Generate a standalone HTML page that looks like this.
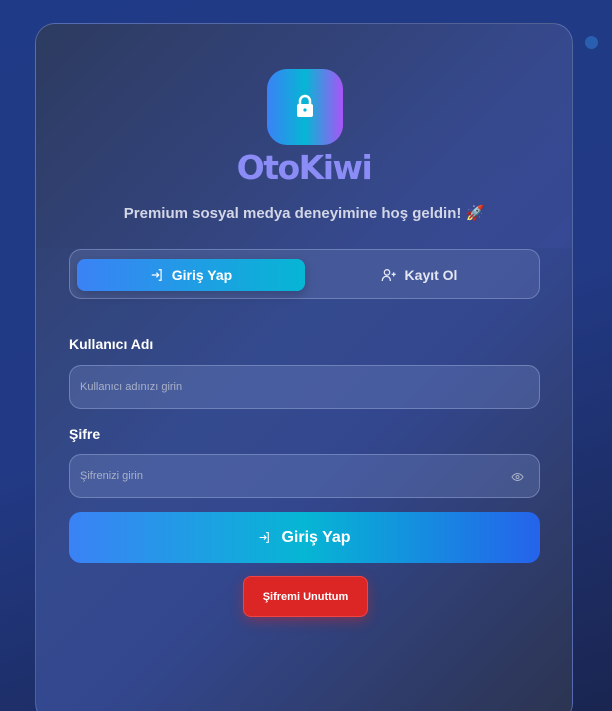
<!DOCTYPE html>
<html style="width:612px;height:711px;overflow:hidden"><head><meta charset="utf-8"><style>
*{box-sizing:border-box;margin:0;padding:0}
body{width:612px;height:711px;overflow:hidden;font-family:"Liberation Sans",sans-serif;background:linear-gradient(160deg,#1f3a86 0%,#223a86 50%,#1a2550 100%);position:relative}
.dot{position:absolute;left:585px;top:36px;width:13px;height:13px;border-radius:50%;background:#2a5fb0}
.card{position:absolute;left:35px;top:23px;width:538px;height:700px;border-radius:20px;border:1px solid rgba(130,150,220,.45);background:linear-gradient(135deg,#2f3d63 0%,#344a8e 45%,#33478f 60%,#2c3450 100%);overflow:hidden}
.head{position:absolute;left:0;top:0;right:0;height:224px;background:linear-gradient(135deg,rgba(40,55,90,.3),rgba(80,80,180,.15))}
.logo{position:absolute;left:231px;top:45px;width:76px;height:76px;border-radius:20px;background:linear-gradient(90deg,#3b82f6 0%,#06b6d4 50%,#a855f7 100%)}
.title{position:absolute;left:0;right:0;top:124px;text-align:center;font-family:"DejaVu Sans",sans-serif;font-size:33px;font-weight:bold;color:#8b8cf6;letter-spacing:-1.5px}
.sub{position:absolute;left:0;right:0;top:180px;text-align:center;font-size:15px;font-weight:bold;color:#d2d6e6}
.tabs{position:absolute;left:33px;top:225px;width:471px;height:50px;border-radius:12px;border:1px solid rgba(160,175,220,.45);background:rgba(120,135,190,.25)}
.tab1{position:absolute;left:7px;top:9px;width:228px;height:32px;border-radius:8px;background:linear-gradient(90deg,#3b82f6,#06b6d4);color:#fff;font-weight:bold;font-size:14px;display:flex;align-items:center;justify-content:center;gap:8px;box-shadow:0 4px 10px rgba(0,0,0,.2)}
.tab2{position:absolute;left:235px;top:9px;width:228px;height:32px;color:#e4e7f2;font-weight:bold;font-size:14px;display:flex;align-items:center;justify-content:center;gap:8px}
.lbl{position:absolute;left:33px;color:#fff;font-weight:bold;font-size:14px}
.inp{position:absolute;left:33px;width:471px;height:44px;border-radius:12px;border:1px solid rgba(160,175,220,.45);background:rgba(120,140,200,.3);color:#a9b0c8;font-size:11px;padding-left:10px;display:flex;align-items:center}
.btn{position:absolute;left:33px;top:488px;width:471px;height:51px;border-radius:12px;background:linear-gradient(90deg,#3b82f6 0%,#06b6d4 50%,#2563eb 100%);color:#fff;font-weight:bold;font-size:16px;display:flex;align-items:center;justify-content:center;gap:10px}
.red{position:absolute;left:207px;top:552px;width:125px;height:41px;border-radius:8px;background:#dc2626;border:1px solid #ef4444;color:#fff;font-weight:bold;font-size:11px;display:flex;align-items:center;justify-content:center;box-shadow:0 4px 12px rgba(220,38,38,.4)}
</style></head><body>
<div class="dot"></div>
<div class="card">
<div class="head"></div>
<div class="logo"><svg width="76" height="76" viewBox="0 0 76 76"><path d="M33 36v-4a5 5 0 0 1 10 0v4" fill="none" stroke="#fff" stroke-width="2.5"/><rect x="30" y="35" width="16" height="13" rx="2" fill="#fff"/><circle cx="38" cy="41" r="1.6" fill="#06b6d4"/></svg></div>
<div class="title">OtoKiwi</div>
<div class="sub">Premium sosyal medya deneyimine hoş geldin! 🚀</div>
<div class="tabs">
<div class="tab1"><svg width="14" height="14" viewBox="0 0 24 24" fill="none" stroke="#fff" stroke-width="2"><path d="M15 3h4v18h-4M3 12h12M11 8l4 4-4 4"/></svg>Giriş Yap</div>
<div class="tab2"><svg width="16" height="16" viewBox="0 0 24 24" fill="none" stroke="#e4e7f2" stroke-width="2"><circle cx="9" cy="8" r="4"/><path d="M2 21v-1a6 6 0 0 1 12 0v1M19 8v6M16 11h6"/></svg>Kayıt Ol</div>
</div>
<div class="lbl" style="top:312px">Kullanıcı Adı</div>
<div class="inp" style="top:341px">Kullanıcı adınızı girin</div>
<div class="lbl" style="top:402px">Şifre</div>
<div class="inp" style="top:430px">Şifrenizi girin<svg style="position:absolute;right:15px;top:16px" width="13" height="12" viewBox="0 0 24 24" fill="none" stroke="#a9b0c8" stroke-width="2"><path d="M1 12s4-7 11-7 11 7 11 7-4 7-11 7S1 12 1 12z"/><circle cx="12" cy="12" r="3"/></svg></div>
<div class="btn"><svg width="13" height="13" viewBox="0 0 24 24" fill="none" stroke="#fff" stroke-width="2"><path d="M15 3h4v18h-4M3 12h12M11 8l4 4-4 4"/></svg>Giriş Yap</div>
<div class="red">Şifremi Unuttum</div>
</div>
</body></html>
